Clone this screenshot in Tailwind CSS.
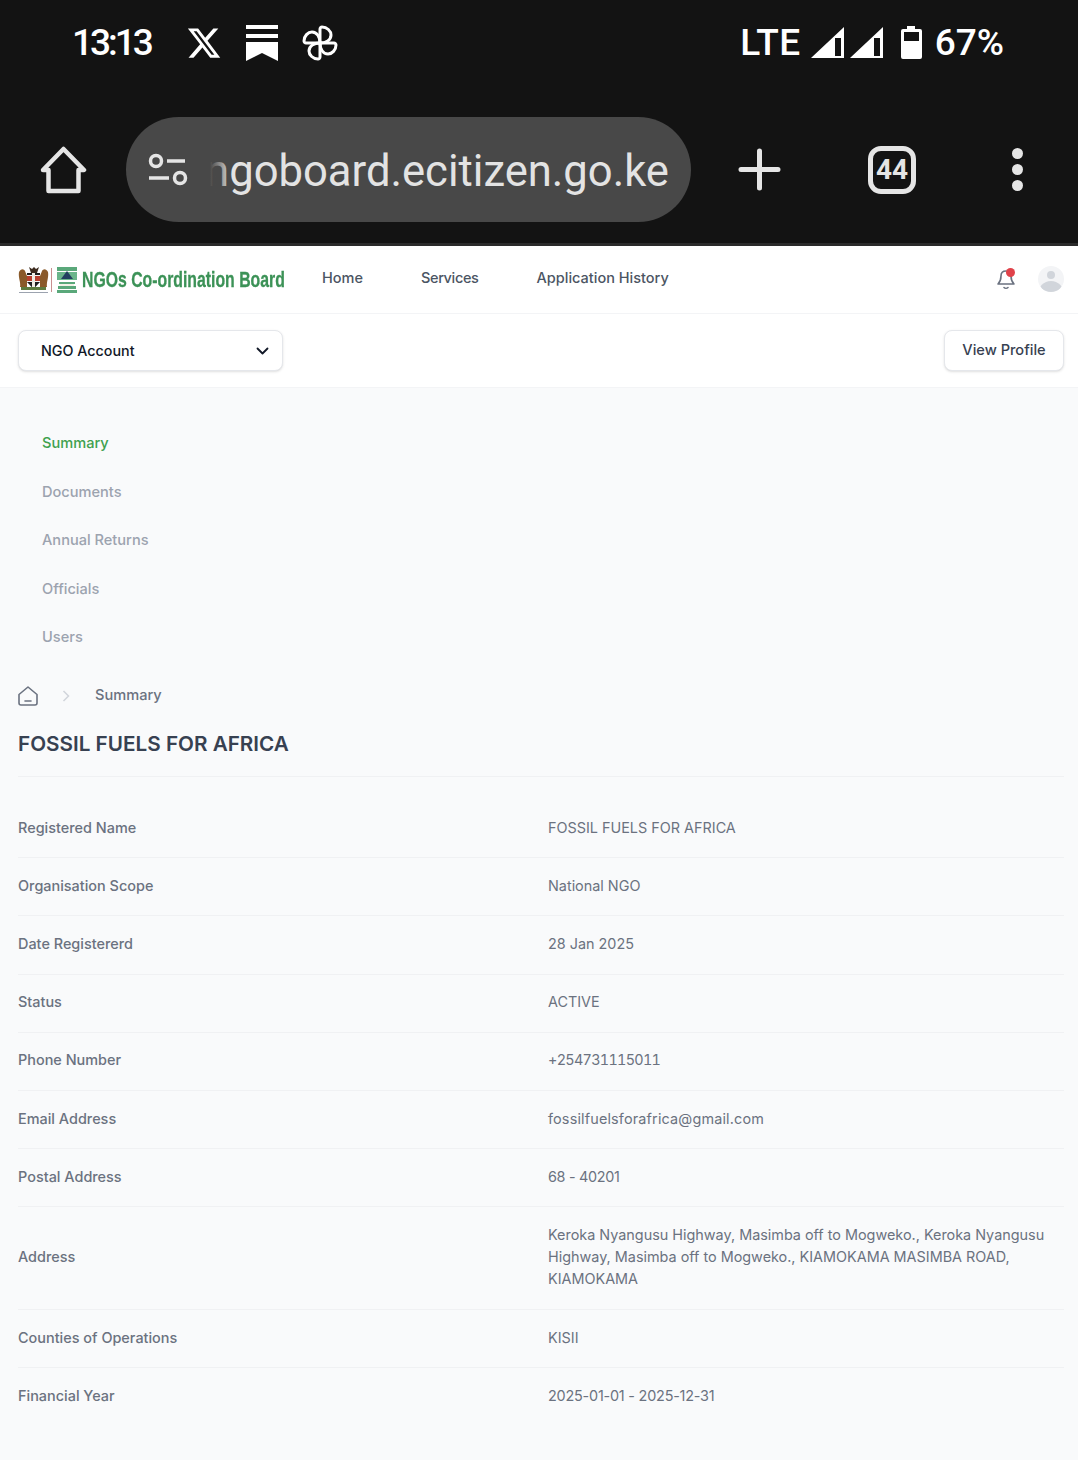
<!DOCTYPE html>
<html lang="en">
<head>
  <meta charset="UTF-8" />
  <meta name="viewport" content="width=device-width, initial-scale=1" />
  <title>NGOs Co-ordination Board</title>
  <script src="https://cdn.jsdelivr.net/npm/@tailwindcss/browser@4"></script>
</head>
<body class="bg-[#f9fafb] font-[Inter,sans-serif] w-[1078px] h-[1460px] overflow-hidden">
  <!-- phone status bar + browser toolbar -->
  <div class="h-[243px] bg-[#131313] font-[Roboto,sans-serif]">
    <div class="h-[85px] flex items-center justify-between pl-[72px] pr-[74px]">
      <div class="flex items-center">
        <span class="text-white text-[37px] font-medium w-[114px] tracking-[-3px]">13:13</span>
        <svg class="w-[36px] h-[36px]" viewBox="0 0 24 24" fill="#fff"><path d="M18.244 2.25h3.308l-7.227 8.26 8.502 11.24H16.17l-5.214-6.817L4.99 21.75H1.68l7.73-8.835L1.254 2.25H8.08l4.713 6.231zm-1.161 17.52h1.833L7.084 4.126H5.117z"/></svg>
        <svg class="ml-[24px] w-[32px] h-[36px]" viewBox="0 0 32 36" fill="#fff"><rect x="0" y="0" width="32" height="4"/><rect x="0" y="9" width="32" height="4"/><path d="M0 17h32v19L16 28 0 36z"/></svg>
        <svg class="ml-[24px] w-[36px] h-[36px]" viewBox="0 0 36 36" fill="none" stroke="#fff" stroke-width="3" stroke-linejoin="round">
          <path d="M18 18V4c0-1 1-2 2-2 5 0 9 4 9 8 0 5-5 8-11 8z"/>
          <path d="M18 18V4c0-1 1-2 2-2 5 0 9 4 9 8 0 5-5 8-11 8z" transform="rotate(90 18 18)"/>
          <path d="M18 18V4c0-1 1-2 2-2 5 0 9 4 9 8 0 5-5 8-11 8z" transform="rotate(180 18 18)"/>
          <path d="M18 18V4c0-1 1-2 2-2 5 0 9 4 9 8 0 5-5 8-11 8z" transform="rotate(270 18 18)"/>
        </svg>
      </div>
      <div class="flex items-center">
        <span class="text-white text-[37px] font-medium tracking-[0.5px]">LTE</span>
        <svg class="ml-[10px] w-[34px] h-[33px]" viewBox="0 0 34 33"><path d="M0 32L33 1v31z" fill="#fff"/><path d="M24 12h6v18h-6z" fill="#131313"/></svg>
        <svg class="ml-[5px] w-[34px] h-[33px]" viewBox="0 0 34 33"><path d="M0 32L33 1v31z" fill="#fff"/><path d="M24 12h6v18h-6z" fill="#131313"/></svg>
        <svg class="ml-[17px] w-[21px] h-[33px]" viewBox="0 0 21 33"><path d="M6 0h8v3h5a2 2 0 0 1 2 2v26a2 2 0 0 1-2 2H2a2 2 0 0 1-2-2V5a2 2 0 0 1 2-2h4z" fill="#fff"/><rect x="3" y="6" width="15" height="9" fill="#131313"/></svg>
        <span class="ml-[13px] text-white text-[37px] font-medium">67%</span>
      </div>
    </div>
    <div class="h-[105px] mt-[32px] flex items-center pl-[40px]">
      <svg class="w-[47px] h-[48px]" viewBox="0 0 47 48" fill="none" stroke="#e5e5e5" stroke-width="4.500" stroke-linejoin="round" stroke-linecap="round"><path d="M3 24L23.500 3 44 24h-5.500v21h-30V24z"/></svg>
      <div class="ml-[39px] w-[565px] h-[105px] rounded-full bg-[#484848] flex items-center relative overflow-hidden">
        <svg class="absolute left-[22px] top-[36px] w-[40px] h-[33px]" viewBox="0 0 40 33" fill="none" stroke="#e5e5e5" stroke-width="3.500"><circle cx="8" cy="8" r="5.500"/><circle cx="32" cy="25" r="5.500"/><path d="M19 8h18M1 25h20"/></svg>
        <div class="ml-[84px] w-[459px] overflow-hidden flex justify-end relative">
          <span class="text-[43.6px] text-[#e3e3e3] whitespace-nowrap leading-[60px] mt-[4px]">ngoboard.ecitizen.go.ke</span>
          <div class="absolute left-0 top-0 h-full w-[22px] bg-gradient-to-r from-[#484848] to-transparent"></div>
        </div>
      </div>
      <svg class="ml-[47px] w-[43px] h-[43px]" viewBox="0 0 43 43" stroke="#e5e5e5" stroke-width="5" stroke-linecap="round"><path d="M21.500 3v37M3 21.500h37"/></svg>
      <div class="ml-[87px] w-[48px] h-[48px] rounded-[13px] border-[5px] border-[#e5e5e5] flex items-center justify-center text-[#e5e5e5] text-[28px] font-bold leading-none">44</div>
      <div class="ml-[96px] flex flex-col gap-[5px]">
        <div class="w-[11px] h-[11px] rounded-full bg-[#e5e5e5]"></div>
        <div class="w-[11px] h-[11px] rounded-full bg-[#e5e5e5]"></div>
        <div class="w-[11px] h-[11px] rounded-full bg-[#e5e5e5]"></div>
      </div>
    </div>
  </div>
  <div class="h-[3px] bg-[#2b2b2b]"></div>

  <!-- site header -->
  <header class="h-[68px] bg-white border-b border-[#f3f4f6] flex items-center pl-[18px] pr-[14px]">
    <svg class="w-[31px] h-[28px] blur-[0.3px]" viewBox="0 0 31 28">
      <path d="M1 6c2-4 5-3 6-1l2 5v11H2c1-4-2-10-1-15z" fill="#8a5a2a"/>
      <path d="M30 6c-2-4-5-3-6-1l-2 5v11h7c-1-4 2-10 1-15z" fill="#8a5a2a"/>
      <path d="M9 7h13v9l-6.500 7L9 16z" fill="#1f1f1f"/>
      <rect x="9" y="10" width="13" height="5" fill="#b8402f"/>
      <rect x="9" y="9" width="13" height="1" fill="#f5f5f5"/>
      <rect x="9" y="15" width="13" height="1" fill="#f5f5f5"/>
      <rect x="14" y="7" width="3" height="14" fill="#f0ece4"/>
      <path d="M11 1l3 2 2-2 2 2 3-2-2 6h-6z" fill="#3d2b1f"/>
      <rect x="3" y="21" width="25" height="3" fill="#5d7c3f"/>
      <rect x="1" y="26" width="29" height="1" fill="#9ca3af"/>
    </svg>
    <div class="ml-[2px] w-[1px] h-[24px] bg-[#c98f8f]"></div>
    <svg class="ml-[5px] w-[20px] h-[26px] blur-[0.3px]" viewBox="0 0 20 26">
      <rect x="0" y="0" width="20" height="4" fill="#5aa87a"/>
      <rect x="0" y="5" width="20" height="8" fill="#6ab58a"/>
      <path d="M4 12l6-8 6 8z" fill="#22405f"/>
      <rect x="0" y="13" width="20" height="2" fill="#fff"/>
      <rect x="2" y="15" width="16" height="2" fill="#5aa87a"/>
      <rect x="3" y="17" width="14" height="2" fill="#f2f2e6"/>
      <rect x="1" y="19" width="18" height="3" fill="#5aa87a"/>
      <rect x="0" y="23" width="20" height="3" fill="#5aa87a"/>
    </svg>
    <div class="ml-[5px] w-[204px] overflow-visible">
      <span class="block origin-left scale-x-[0.735] font-['Liberation_Sans',sans-serif] font-bold text-[21.500px] leading-[24px] text-[#3c9257] [-webkit-text-stroke:0.3px_#3c9257] whitespace-nowrap">NGOs Co-ordination Board</span>
    </div>
    <nav class="ml-[36px] mb-[4px] flex gap-[58px] text-[14.5px] font-medium text-[#4b5563]">
      <a>Home</a>
      <a class="tracking-[-0.35px]">Services</a>
      <a>Application History</a>
    </nav>
    <div class="ml-auto mb-[2px] flex items-center gap-[22px]">
      <div class="relative w-[20px] h-[24px]">
        <svg class="w-[20px] h-[24px]" viewBox="0 0 20 24" fill="none" stroke="#6b7280" stroke-width="1.600" stroke-linecap="round" stroke-linejoin="round"><path d="M10 4C7 4 5 6 5 9c0 4-1 6-3 8h16c-2-2-3-4-3-8 0-3-2-5-5-5z"/><path d="M8 20.500c1 1 3 1 4 0"/></svg>
        <div class="absolute right-[1px] top-[1px] w-[9px] h-[9px] rounded-full bg-[#e0424a]"></div>
      </div>
      <div class="w-[26px] h-[26px] rounded-full bg-[#f3f4f6] overflow-hidden relative">
        <div class="absolute left-[9px] top-[5px] w-[8px] h-[8px] rounded-full bg-[#d1d5db]"></div>
        <div class="absolute left-0 top-[15px] w-[26px] h-[22px] rounded-t-full bg-[#d1d5db]"></div>
      </div>
    </div>
  </header>

  <!-- account switcher -->
  <div class="h-[74px] bg-white border-b border-[#f3f4f6] flex items-center justify-between pl-[18px] pr-[14px]">
    <div class="w-[265px] h-[41px] bg-white border border-[#e5e7eb] rounded-[8px] shadow-sm flex items-center justify-between pl-[22px] pr-[13px]">
      <span class="text-[14.3px] font-medium text-[#111827]">NGO Account</span>
      <svg class="w-[13px] h-[8px]" viewBox="0 0 13 8" fill="none" stroke="#111827" stroke-width="1.800" stroke-linecap="round" stroke-linejoin="round"><path d="M1.500 1.500l5 5 5-5"/></svg>
    </div>
    <div class="w-[120px] h-[41px] bg-white border border-[#e5e7eb] rounded-[8px] shadow-sm flex items-center justify-center text-[14.6px] font-medium text-[#374151]">View Profile</div>
  </div>

  <!-- side nav -->
  <nav class="pt-[44px] pl-[42px] flex flex-col gap-[26.500px] text-[14.6px] font-medium text-[#9ca3af] leading-[22px]">
    <a class="text-[#3fa14f]">Summary</a>
    <a>Documents</a>
    <a>Annual Returns</a>
    <a>Officials</a>
    <a>Users</a>
  </nav>

  <main class="pr-[14px] pl-[18px] pt-[37px]">
    <div class="flex items-center h-[22px]">
      <svg class="w-[20px] h-[20px]" viewBox="0 0 20 20" fill="none" stroke="#6b7280" stroke-width="1.600" stroke-linejoin="round" stroke-linecap="round"><path d="M1 8.500L10 1l9 7.500V17a2 2 0 0 1-2 2H3a2 2 0 0 1-2-2z"/><path d="M7 15h6"/></svg>
      <svg class="ml-[24px] w-[8px] h-[12px]" viewBox="0 0 8 12" fill="none" stroke="#d1d5db" stroke-width="1.500"><path d="M1.500 1l5 5-5 5"/></svg>
      <span class="ml-[25px] text-[14.6px] font-medium text-[#6b7280]">Summary</span>
    </div>
    <h1 class="mt-[22px] text-[20.700px] leading-[30px] font-semibold text-[#374151] pb-[17px] border-b border-[#f0f1f3]">FOSSIL FUELS FOR AFRICA</h1>
    <dl class="mt-[23px] text-[14.4px] leading-[22px] text-[#6b7280]">
      <div class="flex items-center h-[58.200px] pb-[2px] border-b border-[#f0f1f3]"><dt class="w-[530px] font-medium text-[14.45px]">Registered Name</dt><dd>FOSSIL FUELS FOR AFRICA</dd></div>
      <div class="flex items-center h-[58.200px] pb-[2px] border-b border-[#f0f1f3]"><dt class="w-[530px] font-medium text-[14.45px]">Organisation Scope</dt><dd>National NGO</dd></div>
      <div class="flex items-center h-[58.200px] pb-[2px] border-b border-[#f0f1f3]"><dt class="w-[530px] font-medium text-[14.45px]">Date Registererd</dt><dd>28 Jan 2025</dd></div>
      <div class="flex items-center h-[58.200px] pb-[2px] border-b border-[#f0f1f3]"><dt class="w-[530px] font-medium text-[14.45px]">Status</dt><dd>ACTIVE</dd></div>
      <div class="flex items-center h-[58.200px] pb-[2px] border-b border-[#f0f1f3]"><dt class="w-[530px] font-medium text-[14.45px]">Phone Number</dt><dd class="tabular-nums tracking-[-0.7px]">+254731115011</dd></div>
      <div class="flex items-center h-[58.200px] pb-[2px] border-b border-[#f0f1f3]"><dt class="w-[530px] font-medium text-[14.45px]">Email Address</dt><dd class="tracking-[0.17px]">fossilfuelsforafrica@gmail.com</dd></div>
      <div class="flex items-center h-[58.200px] pb-[2px] border-b border-[#f0f1f3]"><dt class="w-[530px] font-medium text-[14.45px]">Postal Address</dt><dd class="tracking-[-0.3px]">68 - 40201</dd></div>
      <div class="flex items-center h-[102.800px] pb-[2px] border-b border-[#f0f1f3]"><dt class="w-[530px] font-medium text-[14.45px]">Address</dt><dd class="w-[516px]">Keroka Nyangusu Highway, Masimba off to Mogweko., Keroka Nyangusu Highway, Masimba off to Mogweko., KIAMOKAMA MASIMBA ROAD, KIAMOKAMA</dd></div>
      <div class="flex items-center h-[58.200px] pb-[2px] border-b border-[#f0f1f3]"><dt class="w-[530px] font-medium text-[14.45px]">Counties of Operations</dt><dd>KISII</dd></div>
      <div class="flex items-center h-[58.200px] pb-[2px]"><dt class="w-[530px] font-medium text-[14.45px]">Financial Year</dt><dd class="tracking-[-0.2px]">2025-01-01 - 2025-12-31</dd></div>
    </dl>
  </main>
</body>
</html>
